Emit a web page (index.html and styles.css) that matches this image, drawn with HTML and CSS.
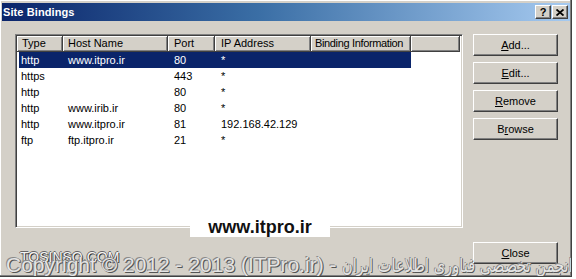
FILE: index.html
```html
<!DOCTYPE html>
<html>
<head>
<meta charset="utf-8">
<title>Site Bindings</title>
<link rel="stylesheet" href="styles.css">
</head>
<body>
<div class="window">
  <div class="titlebar">
    <span class="title">Site Bindings</span>
    <div class="caption-btns">
      <span class="cbtn help">?</span>
      <span class="cbtn close"><svg width="8" height="7" viewBox="0 0 8 7"><path d="M0.5 0.5L7.5 6.5M7.5 0.5L0.5 6.5" stroke="#000" stroke-width="1.8"/></svg></span>
    </div>
  </div>
  <div class="body">
    <div class="main">
      <div class="list">
        <div class="header">
          <div class="hcell">Type</div>
          <div class="hcell">Host Name</div>
          <div class="hcell">Port</div>
          <div class="hcell">IP Address</div>
          <div class="hcell tight">Binding Information</div>
          <div class="hcell filler"></div>
        </div>
        <div class="row selected"><span>http</span><span>www.itpro.ir</span><span>80</span><span>*</span><span></span></div>
        <div class="row"><span>https</span><span></span><span>443</span><span>*</span><span></span></div>
        <div class="row"><span>http</span><span></span><span>80</span><span>*</span><span></span></div>
        <div class="row"><span>http</span><span>www.irib.ir</span><span>80</span><span>*</span><span></span></div>
        <div class="row"><span>http</span><span>www.itpro.ir</span><span>81</span><span>192.168.42.129</span><span></span></div>
        <div class="row"><span>ftp</span><span>ftp.itpro.ir</span><span>21</span><span>*</span><span></span></div>
      </div>
      <div class="actions">
        <button class="btn"><u>A</u>dd...</button>
        <button class="btn"><u>E</u>dit...</button>
        <button class="btn"><u>R</u>emove</button>
        <button class="btn">B<u>r</u>owse</button>
      </div>
    </div>
    <div class="footer">
      <button class="btn"><u>C</u>lose</button>
    </div>
  </div>
  <div class="wm-site">www.itpro.ir</div>
  <div class="wm-tosinso">TOSINSO.COM</div>
  <div class="wm-copy">Copyright © 2012 - 2013 (ITPro.ir) - <span class="fa">انجمن تخصصی فناوری اطلاعات ایران</span></div>
</div>
</body>
</html>
```
FILE: styles.css
```css
html, body {
  margin: 0;
  padding: 0;
  background: #ffffff;
  overflow: hidden;
}

body {
  font-family: "Liberation Sans", Arial, sans-serif;
  font-size: 11px;
  color: #000;
}

.window {
  position: relative;
  box-sizing: border-box;
  width: 572px;
  height: 277px;
  background: #d4d0c8;
  border-right: 1px solid #404040;
  border-bottom: 1px solid #404040;
  box-shadow: inset -1px -1px 0 #808080, inset 1px 1px 0 #ffffff;
  padding: 3px 1px 0 2px;
  overflow: hidden;
}

.titlebar {
  height: 18px;
  background: linear-gradient(to right, #0a246a 0%, #3a6ea5 45%, #a6caf0 100%);
  display: flex;
  align-items: center;
  justify-content: space-between;
}

.title {
  color: #fff;
  font-weight: bold;
  font-size: 11px;
  padding-left: 1px;
  letter-spacing: 0.1px;
}

.caption-btns {
  display: flex;
  gap: 1px;
  padding-right: 2px;
}

.cbtn {
  box-sizing: border-box;
  width: 16px;
  height: 14px;
  background: #d4d0c8;
  border: 1px solid;
  border-color: #ffffff #404040 #404040 #ffffff;
  box-shadow: inset -1px -1px 0 #808080;
  display: flex;
  align-items: center;
  justify-content: center;
  font-weight: bold;
  font-size: 11px;
  line-height: 1;
}

.body {
  padding: 13px 12px 0 13px;
}

.main {
  display: flex;
  gap: 10px;
  align-items: flex-start;
}

.list {
  box-sizing: border-box;
  width: 448px;
  height: 194px;
  background: #fff;
  border: 1px solid;
  border-color: #808080 #ffffff #ffffff #808080;
  box-shadow: inset 1px 1px 0 #404040, inset -1px -1px 0 #d4d0c8;
  padding: 1px;
}

.header {
  display: grid;
  grid-template-columns: 46px 105px 47px 96px 100px 1fr;
  height: 16px;
  margin-right: 1px;
}

.hcell {
  box-sizing: border-box;
  height: 16px;
  background: #d4d0c8;
  border-right: 1px solid #404040;
  border-bottom: 1px solid #404040;
  box-shadow: inset 1px 1px 0 #ffffff, inset -1px -1px 0 #808080;
  line-height: 15px;
  padding-left: 5px;
  white-space: nowrap;
  overflow: hidden;
}

.hcell:nth-child(3),
.hcell:nth-child(4) {
  padding-left: 6px;
}

.hcell.tight {
  padding-left: 4px;
  letter-spacing: -0.35px;
}

.row {
  display: grid;
  grid-template-columns: 44px 105px 47px 96px 100px;
  height: 16px;
  line-height: 16px;
  margin-left: 2px;
  width: 392px;
}

.row span {
  white-space: nowrap;
  padding-left: 5px;
}

.row span:first-child {
  padding-left: 2px;
}

.row span:nth-child(3),
.row span:nth-child(4) {
  padding-left: 6px;
}

.row.selected {
  background: #0a246a;
  color: #fff;
}

.actions {
  display: flex;
  flex-direction: column;
  gap: 6px;
}

.btn {
  box-sizing: border-box;
  width: 85px;
  height: 22px;
  background: #d4d0c8;
  border: 1px solid;
  border-color: #ffffff #404040 #404040 #ffffff;
  box-shadow: inset -1px -1px 0 #808080;
  font-family: "Liberation Sans", Arial, sans-serif;
  font-size: 11px;
  color: #000;
  padding: 0;
  margin: 0;
  text-align: center;
  line-height: 19px;
}

.footer {
  display: flex;
  justify-content: flex-end;
  margin-top: 14px;
}

.wm-site {
  position: absolute;
  left: 190px;
  top: 214px;
  width: 140px;
  height: 23px;
  background: #fff;
  font-family: "Liberation Sans", Arial, sans-serif;
  font-weight: bold;
  font-size: 18px;
  line-height: 26px;
  text-align: center;
  color: #111;
}

.wm-tosinso {
  position: absolute;
  left: 20px;
  top: 250px;
  font-family: "Liberation Sans", Arial, sans-serif;
  font-size: 14px;
  line-height: 1;
  color: #f4f4f4;
  text-shadow: 1px 1px 0 #333, -1px 0 0 #666, 0 -1px 0 #666;
  white-space: nowrap;
}

.wm-copy {
  position: absolute;
  left: 6px;
  top: 254px;
  font-family: "Liberation Sans", "DejaVu Sans", Arial, sans-serif;
  font-size: 21px;
  line-height: 1;
  color: #e4e4e4;
  text-shadow: 1px 1px 0 #555, -1px -1px 0 #8a8a8a, 1px 0 0 #777;
  white-space: nowrap;
}

.wm-copy .fa {
  display: inline-block;
  font-family: "DejaVu Sans", sans-serif;
  font-size: 19px;
  transform: scaleX(0.77);
  transform-origin: left center;
}
```
